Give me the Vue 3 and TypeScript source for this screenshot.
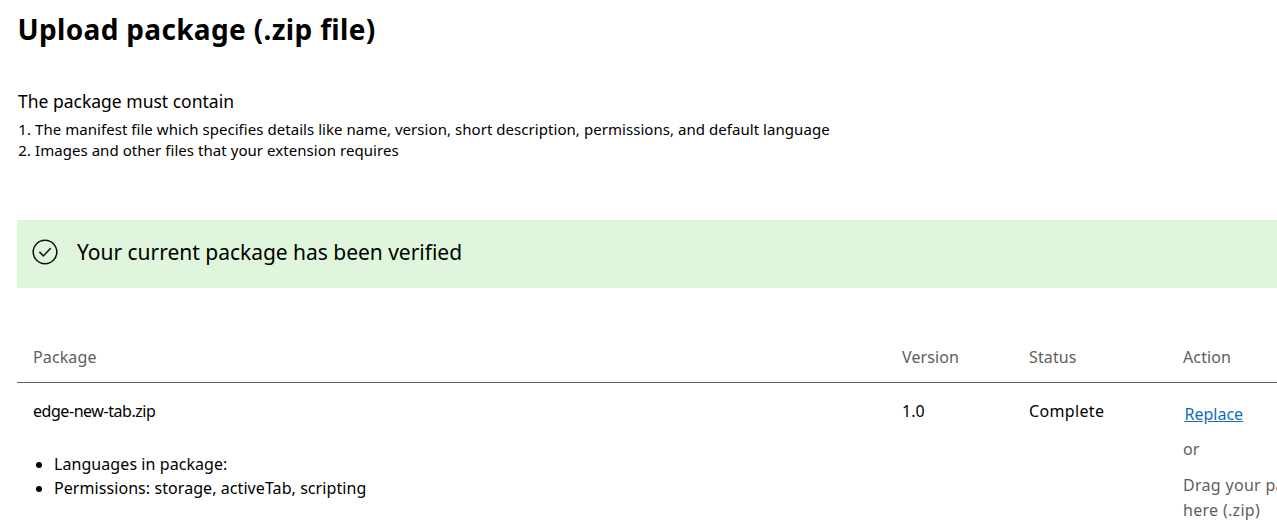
<script setup lang="ts">
const requirements: string[] = [
  'The manifest file which specifies details like name, version, short description, permissions, and default language',
  'Images and other files that your extension requires',
]
const details: string[] = ['Languages in package:', 'Permissions: storage, activeTab, scripting']
</script>

<template>
  <main class="page">
    <h1 class="title">Upload package (.zip file)</h1>
    <p class="lead">The package must contain</p>
    <ol class="reqs">
      <li v-for="r in requirements" :key="r">{{ r }}</li>
    </ol>
    <div class="banner">
      <svg class="check" width="26" height="26" viewBox="0 0 26 26" fill="none" stroke="#111" stroke-width="1.5">
        <circle cx="13" cy="13" r="11.8" />
        <path d="M7.9 13.4l3.5 3.5 6.9-7.3" stroke-linecap="round" stroke-linejoin="round" />
      </svg>
      <span>Your current package has been verified</span>
    </div>
    <div class="table">
      <div class="row head">
        <div class="cell">Package</div>
        <div class="cell">Version</div>
        <div class="cell">Status</div>
        <div class="cell">Action</div>
      </div>
      <div class="row body">
        <div class="cell">
          <div class="file">edge-new-tab.zip</div>
          <ul class="details">
            <li v-for="d in details" :key="d">{{ d }}</li>
          </ul>
        </div>
        <div class="cell">1.0</div>
        <div class="cell status">Complete</div>
        <div class="cell action">
          <a class="link" href="#">Replace</a>
          <div class="or">or</div>
          <div class="drag">Drag your package<br />here (.zip)</div>
        </div>
      </div>
    </div>
  </main>
</template>

<style>
html, body { margin: 0; overflow: hidden; background: #fff; }
</style>

<style scoped>
.page {
  width: 1500px;
  height: 522px;
  overflow: hidden;
  box-sizing: border-box;
  padding: 9px 0 0 17px;
  font-family: "Noto Sans", "Open Sans", sans-serif;
  color: #000;
}
.title {
  margin: 0 0 0 0.5px;
  font-size: 28px;
  line-height: 40px;
  font-weight: 700;
  letter-spacing: 0.33px;
}
.lead {
  margin: 40px 0 0 1px;
  font-size: 17.5px;
  line-height: 24px;
}
.reqs {
  margin: 6px 0 0;
  padding: 0 0 0 18px;
  font-size: 15px;
  line-height: 21px;
  letter-spacing: 0.05px;
}
.banner {
  display: flex;
  align-items: center;
  gap: 19px;
  height: 63px;
  margin-top: 59px;
  padding: 0 0 5px 15px;
  background: #dff6dd;
  font-size: 21px;
  letter-spacing: -0.02px;
}
.check { flex: none; }
.table { margin-top: 46px; }
.row {
  display: grid;
  grid-template-columns: 869px 127px 154px 1fr;
}
.cell { padding-left: 16px; }
.head {
  height: 48px;
  border-bottom: 1px solid #605e5c;
  color: #605e5c;
  font-size: 16px;
  line-height: 46px;
  letter-spacing: 0.12px;
}
.body {
  padding-top: 16px;
  font-size: 16px;
  line-height: 24px;
}
.file { letter-spacing: -0.45px; }
.status { letter-spacing: 0.35px; }
.details {
  margin: 29px 0 0;
  padding: 0 0 0 21px;
  letter-spacing: 0.07px;
}
.action { color: #605e5c; }
.link {
  display: inline-block;
  margin: 3px 0 0 1.5px;
  color: #0f6cbd;
  text-decoration: underline;
}
.or { margin-top: 11px; }
.drag { margin-top: 12px; line-height: 25px; letter-spacing: 0.3px; }
</style>
